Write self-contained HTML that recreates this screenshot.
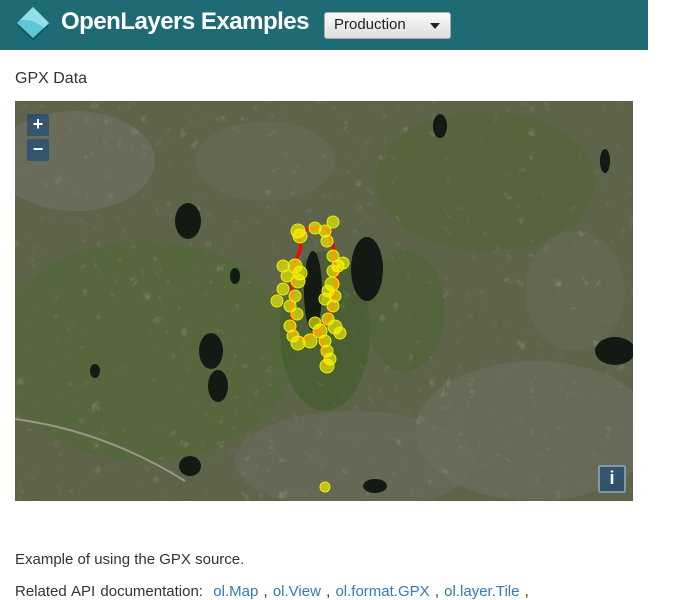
<!DOCTYPE html>
<html><head><meta charset="utf-8"><style>
body{margin:0;width:700px;height:600px;background:#fff;font-family:"Liberation Sans",sans-serif;overflow:hidden;position:relative}
.hdr{position:absolute;left:0;top:0;width:648px;height:50px;background:#1f6b75}
.title{position:absolute;left:61px;top:8px;color:#fff;font-size:24px;font-weight:bold;letter-spacing:-0.5px}
.sel{position:absolute;left:324px;top:12px;width:127px;height:27px;border:1px solid #aaa;border-radius:3px;background:linear-gradient(#fafafa,#ddd);box-sizing:border-box;font-size:15px;color:#222;padding:3px 0 0 9px}
.sel:after{content:"";position:absolute;right:10px;top:10px;border-left:5px solid transparent;border-right:5px solid transparent;border-top:6px solid #222}
h4{position:absolute;left:15px;top:70px;margin:0;font-weight:normal;font-size:16px;color:#333}
.map{position:absolute;left:15px;top:101px;width:618px;height:400px}
.btn{position:absolute;width:22px;height:22px;background:rgba(0,60,136,.5);color:#fff;font-size:18px;font-weight:bold;text-align:center;line-height:21px;border-radius:2px}
p{position:absolute;left:15px;margin:0;font-size:15px;color:#333}
a{color:#337ab7;text-decoration:none}
</style></head><body>
<div class="hdr">
<svg style="position:absolute;left:14px;top:5px" width="38" height="40" viewBox="0 0 38 40"><path d="M19 6 L35 21 L19 36 L3 21Z" fill="#155a63"/><path d="M19 2 L35 18 L19 33 L3 18Z" fill="#5cc9d6"/><path d="M19 2 L35 18 L30 23 C22 16 12 14 6 15Z" fill="#8fe0e8"/></svg>
<div class="title">OpenLayers Examples</div>
<div class="sel">Production</div>
</div>
<h4>GPX Data</h4>
<div class="map">
<svg width="618" height="400" viewBox="0 0 618 400">
<defs><filter id="n"><feTurbulence baseFrequency="0.08" numOctaves="3" seed="4"/><feColorMatrix values="0 0 0 0 0.75 0 0 0 0 0.75 0 0 0 0 0.7 0 0 0 1.4 -0.75"/></filter></defs>
<rect width="618" height="400" fill="#5d6449"/>
<ellipse cx="130" cy="250" rx="150" ry="110" fill="#4f6a34" opacity=".5"/>
<ellipse cx="310" cy="230" rx="45" ry="80" fill="#3f5a2a" opacity=".6"/>
<ellipse cx="390" cy="210" rx="40" ry="60" fill="#4a6430" opacity=".5"/>
<ellipse cx="470" cy="80" rx="110" ry="70" fill="#50652f" opacity=".4"/>
<ellipse cx="520" cy="330" rx="120" ry="70" fill="#707068" opacity=".45"/>
<ellipse cx="340" cy="360" rx="120" ry="50" fill="#6d6c62" opacity=".45"/>
<ellipse cx="60" cy="60" rx="80" ry="50" fill="#77756a" opacity=".45"/>
<ellipse cx="250" cy="60" rx="70" ry="40" fill="#6f7060" opacity=".35"/>
<ellipse cx="560" cy="190" rx="50" ry="60" fill="#6f7060" opacity=".35"/>
<rect width="618" height="400" filter="url(#n)" opacity=".4"/>
<g fill="#121a13">
<ellipse cx="352" cy="168" rx="16" ry="32"/><ellipse cx="298" cy="190" rx="9" ry="40"/>
<ellipse cx="173" cy="120" rx="13" ry="18"/><ellipse cx="196" cy="250" rx="12" ry="18"/><ellipse cx="203" cy="285" rx="10" ry="16"/>
<ellipse cx="425" cy="25" rx="7" ry="12"/><ellipse cx="600" cy="250" rx="20" ry="14"/><ellipse cx="175" cy="365" rx="11" ry="10"/>
<ellipse cx="220" cy="175" rx="5" ry="8"/><ellipse cx="590" cy="60" rx="5" ry="12"/><ellipse cx="360" cy="385" rx="12" ry="7"/><ellipse cx="80" cy="270" rx="5" ry="7"/>
</g>
<path d="M0 318 Q90 330 170 380" stroke="#9a9688" stroke-width="2" fill="none"/>
<path d="M283 132 L286 147 L279 165 L276 200 L278 235 L290 240 L300 232 L307 225 L315 215 L320 195 L322 175 L318 145 L312 128 L300 127 L283 130 M305 230 L310 250 L312 265" stroke="#f00" stroke-width="3" fill="none"/>
<g fill="#ff0" fill-opacity=".6" stroke="#ee0" stroke-width="1">
<circle cx="283" cy="130" r="7"/><circle cx="285" cy="135" r="7"/><circle cx="300" cy="127" r="6"/><circle cx="310" cy="130" r="6"/><circle cx="318" cy="121" r="6"/><circle cx="312" cy="140" r="6"/><circle cx="318" cy="155" r="6"/><circle cx="323" cy="165" r="6"/><circle cx="318" cy="170" r="6"/><circle cx="328" cy="162" r="6"/><circle cx="317" cy="183" r="7"/><circle cx="320" cy="195" r="6"/><circle cx="318" cy="205" r="6"/><circle cx="313" cy="218" r="6"/><circle cx="320" cy="226" r="7"/><circle cx="305" cy="230" r="7"/><circle cx="310" cy="240" r="6"/><circle cx="312" cy="250" r="6"/><circle cx="315" cy="258" r="6"/><circle cx="312" cy="265" r="7"/>
<circle cx="268" cy="165" r="6"/><circle cx="272" cy="175" r="6"/><circle cx="280" cy="165" r="7"/><circle cx="285" cy="172" r="7"/><circle cx="283" cy="180" r="7"/><circle cx="268" cy="188" r="6"/><circle cx="262" cy="200" r="6"/><circle cx="280" cy="195" r="6"/><circle cx="275" cy="205" r="6"/><circle cx="282" cy="213" r="6"/><circle cx="275" cy="225" r="6"/><circle cx="278" cy="235" r="6"/><circle cx="283" cy="242" r="7"/><circle cx="295" cy="240" r="7"/><circle cx="300" cy="222" r="6"/><circle cx="310" cy="198" r="6"/><circle cx="325" cy="232" r="6"/><circle cx="313" cy="190" r="6"/>
</g>
<circle cx="310" cy="386" r="5" fill="#ff0" fill-opacity=".6" stroke="#ee0"/>
</svg>
<div class="btn" style="left:12px;top:13px">+</div>
<div class="btn" style="left:12px;top:38px">−</div>
<div class="btn" style="left:583px;top:364px;width:24px;height:24px;border:2px solid rgba(255,255,255,.4);line-height:23px">i</div>
</div>
<p style="top:551px">Example of using the GPX source.</p>
<p style="top:583px;word-spacing:1px">Related API documentation: &nbsp;<a>ol.Map</a> , <a>ol.View</a> , <a>ol.format.GPX</a> , <a>ol.layer.Tile</a> ,</p>
</body></html>
